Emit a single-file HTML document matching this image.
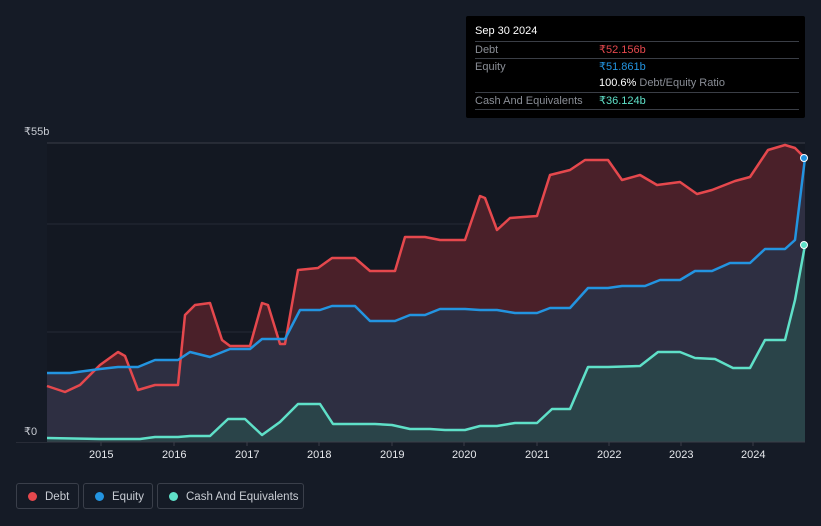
<!DOCTYPE html><html><head><style>
body{margin:0;width:821px;height:526px;background:#151b26;font-family:"Liberation Sans",sans-serif;overflow:hidden;position:relative}
.tt{position:absolute;left:466px;top:16px;width:339px;height:102px;background:#000;border-radius:2px;font-size:11px;color:#8a8e96}
.tt .h{position:absolute;left:9px;top:9px;color:#fff;font-size:11px}
.row{position:absolute;left:9px;width:324px;border-top:1px solid #3a3e46;height:17px;line-height:17px}
.row span{position:absolute;left:124px}
.lg{position:absolute;top:483px;height:26px;border:1px solid #3a3f4a;border-radius:3px;color:#c8ccd3;font-size:11.5px;line-height:26px;box-sizing:border-box}
.lg i{position:absolute;left:11px;top:8px;width:9px;height:9px;border-radius:50%}
.ax{position:absolute;color:#e6e8ec;font-size:11px;top:449px}
</style></head><body>
<svg width="821" height="526" style="position:absolute;left:0;top:0">
<rect x="47" y="143" width="758" height="299" fill="#131822"/>
<line x1="47" y1="143" x2="805" y2="143" stroke="#3a3e48"/>
<line x1="47" y1="224" x2="805" y2="224" stroke="#252a35"/>
<line x1="47" y1="332" x2="805" y2="332" stroke="#252a35"/>
<path d="M47,386 L65,392 80,385 100,365 118,352 125,356 138,390 155,385 178,385 185,315 195,305 210,303 222,340 230,346 250,346 262,303 268,305 280,344 285,344 298,270 318,268 332,258 355,258 370,271 395,271 405,237 425,237 440,240 465,240 480,196 485,198 497,230 510,218 537,216 550,175 570,170 585,160 608,160 622,180 640,175 657,185 680,182 697,194 712,190 735,181 750,177 768,150 785,145 795,148 805,158 L805,442 47,442Z" fill="#4a2029"/>
<path d="M47,373 L70,373 100,369 118,367 138,367 155,360 178,360 190,352 210,357 230,349 250,349 262,339 285,339 300,310 320,310 332,306 355,306 370,321 395,321 410,315 425,315 440,309 465,309 480,310 497,310 515,313 537,313 550,308 570,308 588,288 608,288 622,286 645,286 660,280 680,280 695,271 712,271 730,263 750,263 765,249 785,249 795,240 805,158 L805,442 47,442Z" fill="#2e2f42"/>
<path d="M47,438 L100,439 140,439 155,437 178,437 190,436 210,436 228,419 245,419 262,435 280,422 298,404 320,404 333,424 355,424 375,424 392,425 410,429 430,429 445,430 465,430 480,426 497,426 515,423 537,423 552,409 570,409 588,367 608,367 640,366 658,352 680,352 695,358 715,359 733,368 750,368 765,340 785,340 795,300 805,245 L805,442 47,442Z" fill="#2a4449"/>
<g fill="none" stroke-width="2.5" stroke-linejoin="round">
<path d="M47,386 L65,392 80,385 100,365 118,352 125,356 138,390 155,385 178,385 185,315 195,305 210,303 222,340 230,346 250,346 262,303 268,305 280,344 285,344 298,270 318,268 332,258 355,258 370,271 395,271 405,237 425,237 440,240 465,240 480,196 485,198 497,230 510,218 537,216 550,175 570,170 585,160 608,160 622,180 640,175 657,185 680,182 697,194 712,190 735,181 750,177 768,150 785,145 795,148 805,158" stroke="#e5484d"/>
<path d="M47,373 L70,373 100,369 118,367 138,367 155,360 178,360 190,352 210,357 230,349 250,349 262,339 285,339 300,310 320,310 332,306 355,306 370,321 395,321 410,315 425,315 440,309 465,309 480,310 497,310 515,313 537,313 550,308 570,308 588,288 608,288 622,286 645,286 660,280 680,280 695,271 712,271 730,263 750,263 765,249 785,249 795,240 805,158" stroke="#2394e0"/>
<path d="M47,438 L100,439 140,439 155,437 178,437 190,436 210,436 228,419 245,419 262,435 280,422 298,404 320,404 333,424 355,424 375,424 392,425 410,429 430,429 445,430 465,430 480,426 497,426 515,423 537,423 552,409 570,409 588,367 608,367 640,366 658,352 680,352 695,358 715,359 733,368 750,368 765,340 785,340 795,300 805,245" stroke="#5fe0c8"/>
</g>
<circle cx="804" cy="158" r="3.5" fill="#2394e0" stroke="#fff" stroke-width="1"/>
<circle cx="804" cy="245" r="3.5" fill="#5fe0c8" stroke="#fff" stroke-width="1"/>
<line x1="16" y1="442" x2="805" y2="442" stroke="#3a3e48"/>
<g stroke="#3a3e48"><line x1="101" y1="442" x2="101" y2="446"/><line x1="174" y1="442" x2="174" y2="446"/><line x1="247" y1="442" x2="247" y2="446"/><line x1="319" y1="442" x2="319" y2="446"/><line x1="392" y1="442" x2="392" y2="446"/><line x1="464" y1="442" x2="464" y2="446"/><line x1="537" y1="442" x2="537" y2="446"/><line x1="609" y1="442" x2="609" y2="446"/><line x1="681" y1="442" x2="681" y2="446"/><line x1="753" y1="442" x2="753" y2="446"/></g>
</svg>
<div style="position:absolute;left:24px;top:125px;color:#c8ccd3;font-size:11px">₹55b</div>
<div style="position:absolute;left:16px;top:425px;width:31px;height:17px;background:#151b26"></div>
<div style="position:absolute;left:24px;top:425px;color:#c8ccd3;font-size:11px">₹0</div>
<div class="ax" style="left:89px">2015</div><div class="ax" style="left:162px">2016</div><div class="ax" style="left:235px">2017</div><div class="ax" style="left:307px">2018</div><div class="ax" style="left:380px">2019</div><div class="ax" style="left:452px">2020</div><div class="ax" style="left:525px">2021</div><div class="ax" style="left:597px">2022</div><div class="ax" style="left:669px">2023</div><div class="ax" style="left:741px">2024</div>
<div class="tt"><div class="h">Sep 30 2024</div>
<div class="row" style="top:25px">Debt<span style="color:#e5484d">₹52.156b</span></div>
<div class="row" style="top:42px">Equity<span style="color:#2394e0">₹51.861b</span></div>
<div class="row" style="top:59px;border-top:none"><span style="color:#fff">100.6% <b style="font-weight:normal;color:#8a8e96">Debt/Equity Ratio</b></span></div>
<div class="row" style="top:76px">Cash And Equivalents<span style="color:#5fe0c8">₹36.124b</span></div>
<div class="row" style="top:93px;height:0"></div>
</div>
<div class="lg" style="left:16px;width:63px"><i style="background:#e5484d"></i><span style="position:absolute;left:28px">Debt</span></div>
<div class="lg" style="left:83px;width:70px"><i style="background:#2394e0"></i><span style="position:absolute;left:28px">Equity</span></div>
<div class="lg" style="left:157px;width:147px"><i style="background:#5fe0c8"></i><span style="position:absolute;left:28px">Cash And Equivalents</span></div>
</body></html>
